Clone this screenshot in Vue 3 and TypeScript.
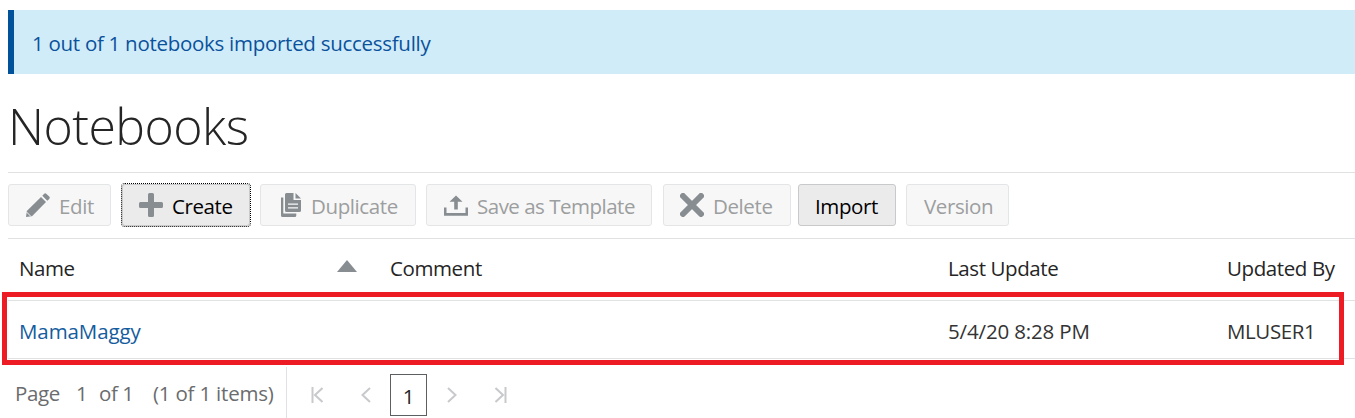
<script setup lang="ts">
interface ToolbarButton {
  id: string
  label: string
  icon?: 'pencil' | 'plus' | 'copy' | 'upload' | 'cross'
  enabled: boolean
}

const buttons: ToolbarButton[] = [
  { id: 'edit', label: 'Edit', icon: 'pencil', enabled: false },
  { id: 'create', label: 'Create', icon: 'plus', enabled: true },
  { id: 'duplicate', label: 'Duplicate', icon: 'copy', enabled: false },
  { id: 'template', label: 'Save as Template', icon: 'upload', enabled: false },
  { id: 'delete', label: 'Delete', icon: 'cross', enabled: false },
  { id: 'import', label: 'Import', enabled: true },
  { id: 'version', label: 'Version', enabled: false },
]
</script>

<template>
  <main class="page">
    <div class="banner"><span>1 out of 1 notebooks imported successfully</span></div>
    <h1>Notebooks</h1>
    <div class="toolbar">
      <button v-for="b in buttons" :key="b.id" :class="['btn', b.id, { enabled: b.enabled }]">
        <svg v-if="b.icon" class="icon" width="24" height="24" viewBox="0 0 24 24">
          <g v-if="b.icon === 'pencil'">
            <path d="M0 24 .8 18 15 4 20 9 6 23.200Z" />
            <path d="M16.300 2.800 18 .9Q19.200 -.2 20.500 .9L23.200 3.600Q24.300 4.800 23.200 6L21.300 7.800Z" />
            <path class="cut" d="M.5 19 5 23.500" />
          </g>
          <path v-else-if="b.icon === 'plus'" d="M10.500 0h3q1.500 0 1.500 1.500V9h7.500q1.500 0 1.500 1.500v3q0 1.500-1.500 1.500H15v7.500q0 1.500-1.500 1.500h-3Q9 24 9 22.500V15H1.500Q0 15 0 13.500v-3Q0 9 1.500 9H9V1.500Q9 0 10.500 0Z" />
          <g v-else-if="b.icon === 'copy'">
            <path d="M2 4.500h2.300V20.500h13V22.500q0 1.500-1.500 1.500H3.500Q2 24 2 22.500Z" />
            <path d="M6 1.500Q6 0 7.500 0h7v7H22v10.500q0 1.500-1.500 1.500h-13Q6 19 6 17.500Z" />
            <path d="M16.500 0l5.500 5.500h-5.500Z" />
            <path class="detail" d="M9 11.200h10M9 14.800h10" />
          </g>
          <g v-else-if="b.icon === 'upload'">
            <path d="M0 14.500h2.500v5.500h19v-5.500H24V22.800H0Z" />
            <path d="M12 2.500 18.500 8.800h-4.700v7.700h-3.600V8.800H5.500Z" />
          </g>
          <path v-else class="cross" d="M3 3 21 21M21 3 3 21" />
        </svg>
        <span class="label">{{ b.label }}</span>
      </button>
    </div>
    <div class="table">
      <div class="row head">
        <div class="name"><span>Name</span>
          <svg class="sort" width="20" height="12" viewBox="0 0 20 12"><path d="M10 0 20 12H0Z" /></svg>
        </div>
        <div>Comment</div>
        <div>Last Update</div>
        <div>Updated By</div>
      </div>
      <div class="row body">
        <div><a class="link">MamaMaggy</a></div>
        <div></div>
        <div class="date">5/4/20 8:28 PM</div>
        <div>MLUSER1</div>
      </div>
      <div class="highlight"></div>
    </div>
    <footer class="pager">
      <div class="summary">
        <span class="p-page">Page</span><span class="p-num">1</span><span class="p-of">of 1</span><span class="p-items">(1 of 1 items)</span>
      </div>
      <svg class="nav first" width="12" height="16" viewBox="0 0 12 16"><path d="M1.500 0v16M11.500 1 4 8l7.500 7" /></svg>
      <svg class="nav prev" width="10" height="16" viewBox="0 0 10 16"><path d="M9 1 1.500 8 9 15" /></svg>
      <div class="current">1</div>
      <svg class="nav next" width="10" height="16" viewBox="0 0 10 16"><path d="M1 1 8.500 8 1 15" /></svg>
      <svg class="nav last" width="12" height="16" viewBox="0 0 12 16"><path d="M.5 1 8 8 .5 15M10.500 0v16" /></svg>
    </footer>
  </main>
</template>

<style>
body {
  background: #fff;
  overflow: hidden;
}
</style>

<style scoped>
.page {
  box-sizing: border-box;
  width: 1355px;
  height: 418px;
  padding: 10px 0 0 8px;
  overflow: hidden;
  background: #fff;
  color: #252525;
  font-family: 'Open Sans', 'Noto Sans', sans-serif;
  font-size: 20.5px;
  line-height: 28px;
  white-space: nowrap;
}
.banner {
  box-sizing: border-box;
  height: 64px;
  padding: 19px 0 0 18px;
  border-left: 6px solid #00529b;
  background: #d1ecf9;
  color: #0b529c;
  letter-spacing: -0.28px;
}
h1 {
  height: 98px;
  margin: 0;
  padding-top: 17px;
  box-sizing: border-box;
  font-size: 50px;
  line-height: 70px;
  font-weight: 300;
  letter-spacing: -0.55px;
}
.toolbar {
  box-sizing: border-box;
  display: flex;
  height: 67px;
  padding-top: 11px;
  border-top: 1px solid #dfe1e2;
  border-bottom: 1px solid #dfe1e2;
}
.btn {
  box-sizing: border-box;
  display: flex;
  align-items: center;
  height: 42px;
  margin: 0 10px 0 0;
  padding: 0 0 0 17px;
  border: 1px solid #e4e5e6;
  border-radius: 3px;
  background: #f7f7f7;
  color: #9c9e9f;
  font: inherit;
  letter-spacing: -0.4px;
}
.btn.enabled {
  border-color: #c7c9cb;
  background: #ebebeb;
  color: #000;
}
.label {
  padding-top: 1px;
}
.edit { width: 103px; }
.btn.create {
  width: 128px;
  margin: 0 10px 0 1px;
  padding-left: 16px;
  outline: 1px dotted #000;
}
.duplicate { width: 156px; }
.btn.duplicate { padding-left: 18px; }
.duplicate .icon { margin-right: 8px; }
.btn.template { width: 226px; margin-right: 11px; letter-spacing: -0.5px; }
.btn.delete { width: 128px; margin-right: 7px; padding-left: 16px; }
.btn.import { width: 98px; padding-left: 16px; }
.version { width: 103px; }
.icon {
  flex: none;
  margin-right: 9px;
  fill: #878d91;
}
.cut { stroke: #f7f7f7; stroke-width: 1; fill: none; }
.detail { stroke: #f7f7f7; stroke-width: 1.3; fill: none; }
.cross { stroke: #878d91; stroke-width: 6; stroke-linecap: round; fill: none; }
.table {
  position: relative;
}
.row {
  box-sizing: border-box;
  display: grid;
  grid-template-columns: 371px 558px 279px 1fr;
  padding-left: 11px;
  border-bottom: 1px solid #dfe1e2;
}
.head { height: 62px; padding-top: 15px; letter-spacing: -0.4px; }
.body { height: 58px; padding-top: 16px; color: #333; letter-spacing: -0.4px; }
.name {
  display: flex;
  justify-content: space-between;
  padding-right: 33px;
}
.sort { margin-top: 6px; fill: #878d91; }
.link { color: #145c9e; letter-spacing: -0.1px; }
.date { letter-spacing: -0.15px; }
.highlight {
  position: absolute;
  box-sizing: border-box;
  left: -6px;
  top: 53px;
  width: 1342px;
  height: 73px;
  border: 5px solid #ed1c24;
}
.pager {
  display: flex;
  align-items: flex-start;
  padding-top: 8px;
  color: #6a6c6e;
}
.summary {
  box-sizing: border-box;
  display: flex;
  width: 279px;
  height: 52px;
  padding: 12px 0 0 7px;
  border-right: 1px solid #dfe1e2;
  letter-spacing: -0.4px;
}
.p-page { width: 61px; }
.p-num { width: 23px; }
.p-of { width: 54px; }
.p-items { letter-spacing: -0.2px; }
.nav {
  flex: none;
  margin-top: 20px;
  fill: none;
  stroke: #c7c9cc;
  stroke-width: 2;
}
.first { margin-left: 24px; }
.prev { margin-left: 38px; }
.current {
  box-sizing: border-box;
  width: 37px;
  height: 42px;
  margin: 7px 0 0 19px;
  border: 1px solid #5c5f61;
  color: #252525;
  line-height: 43px;
  text-align: center;
}
.next { margin-left: 20px; }
.last { margin-left: 38px; }
</style>
